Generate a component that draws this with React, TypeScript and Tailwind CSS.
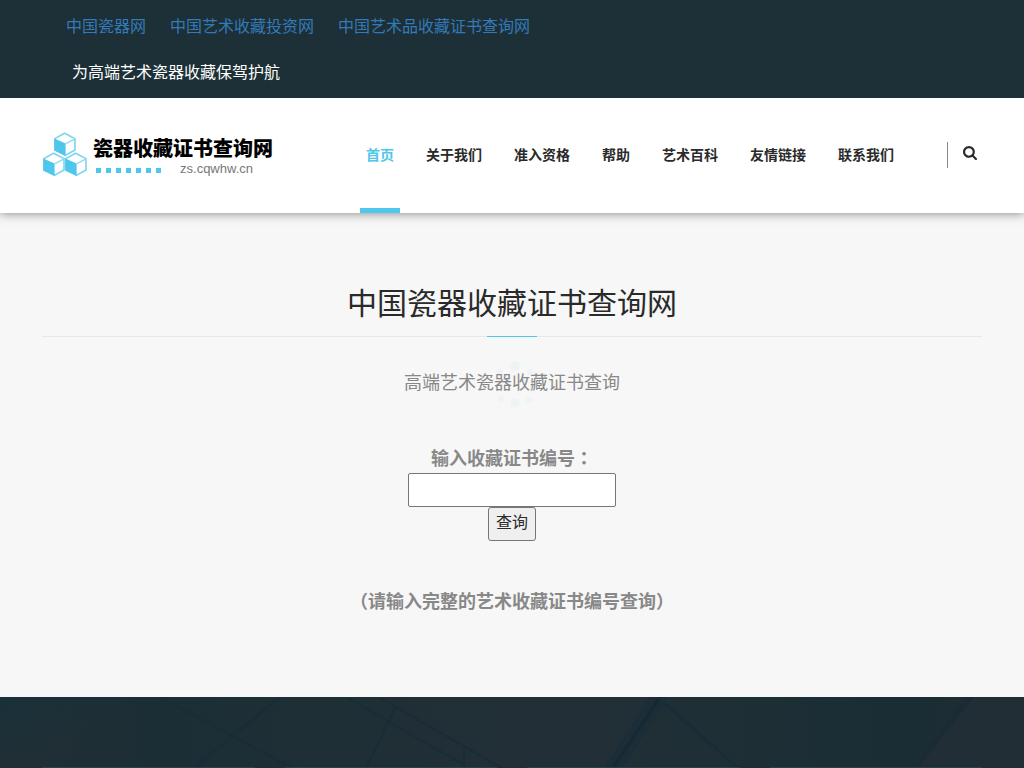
const topLinks = ['中国瓷器网', '中国艺术收藏投资网', '中国艺术品收藏证书查询网'];

const navItems = ['首页', '关于我们', '准入资格', '帮助', '艺术百科', '友情链接', '联系我们'];

// Top-left corner of the hexagon of each cube
const cubes = [
  { x: 11, y: 0 },
  { x: 0, y: 20 },
  { x: 22, y: 20 },
];

const spinnerDots = [
  { cx: 25, cy: 5, r: 5 },
  { cx: 10, cy: 11, r: 3 },
  { cx: 40, cy: 11, r: 3 },
  { cx: 11, cy: 38, r: 3 },
  { cx: 25, cy: 42, r: 5 },
  { cx: 39, cy: 39, r: 3 },
];

function Logo() {
  return (
    <a href="#" className="flex items-start gap-[6px] pl-px text-black">
      <svg className="w-[44px] h-[46px] shrink-0" viewBox="0 0 44 46" aria-hidden="true">
        {cubes.map((c) => (
          <g key={`${c.x}-${c.y}`} transform={`translate(${c.x} ${c.y})`}>
            <path d="M0.8 6.6 L10.6 1.2 L21 6.6 V18 L11.4 23.4 L0.8 18 Z" fill="#fff" stroke="#7ad4f0" strokeWidth="1.6" strokeLinejoin="round" />
            <path d="M0.4 6.6 L11.6 11.6 V23.8 L0.4 18.4 Z" fill="#4fc6ec" />
            <path d="M11.4 11.8 L21 6.8" stroke="#8fdaf2" strokeWidth="1.4" />
          </g>
        ))}
      </svg>
      <span className="block pt-[5px]">
        <span className="block text-[20px] leading-6 font-black whitespace-nowrap">瓷器收藏证书查询网</span>
        <span className="flex items-center justify-between pr-5 pl-[3px]">
          <svg className="mt-1 w-[66px] h-[6px]" viewBox="0 0 66 6" aria-hidden="true">
            {[0, 10, 20, 30, 40, 50, 60].map((x) => (
              <rect key={x} x={x} y="0" width="5" height="5" fill="#4fc6ec" />
            ))}
          </svg>
          <span className="text-[13px] leading-4 text-[#777]">zs.cqwhw.cn</span>
        </span>
      </span>
    </a>
  );
}

function SearchIcon() {
  return (
    <svg className="size-[14px]" viewBox="0 128 1664 1664" fill="currentColor" aria-hidden="true">
      <path d="M1152 832q0-185-131.5-316.5T704 384 387.5 515.5 256 832t131.5 316.5T704 1280t316.5-131.5T1152 832zm512 832q0 52-38 90t-90 38q-54 0-90-38l-343-342q-179 124-399 124-143 0-273.5-55.5t-225-150-150-225T0 832t55.5-273.5 150-225 225-150T704 128t273.5 55.5 225 150 150 225T1408 832q0 220-124 399l343 343q37 37 37 90z" />
    </svg>
  );
}

function GlassBackdrop() {
  return (
    <svg className="absolute inset-0 w-full h-full" viewBox="0 0 1024 71" preserveAspectRatio="none" aria-hidden="true">
      <defs>
        <linearGradient id="glass" x1="0" x2="1" y1="0" y2="0">
          <stop offset="0" stopColor="#212f35" />
          <stop offset="0.15" stopColor="#1c2e35" />
          <stop offset="0.3" stopColor="#1e2f36" />
          <stop offset="0.55" stopColor="#232f36" />
          <stop offset="0.7" stopColor="#1e2f36" />
          <stop offset="0.88" stopColor="#1b2d34" />
          <stop offset="1" stopColor="#1d2d34" />
        </linearGradient>
        <linearGradient id="pane" x1="0" x2="1" y1="0" y2="1">
          <stop offset="0" stopColor="#19303a" />
          <stop offset="0.5" stopColor="#19303a" stopOpacity="0" />
        </linearGradient>
      </defs>
      <rect width="1024" height="71" fill="url(#glass)" />
      <rect width="160" height="71" fill="url(#pane)" />
      <path d="M915 71 L974 0 H1024 V71 Z" fill="#222e35" />
      <g fill="none" stroke="#192c37" strokeWidth="2">
        <path d="M160 0 L292 71" />
        <path d="M280 0 L194 71" strokeWidth="3" />
        <path d="M346 0 L464 68" />
        <path d="M378 0 L502 71" />
        <path d="M396 9 L366 71" />
        <path d="M464 50 V71" />
        <path d="M662 4 L738 71" strokeWidth="3" />
      </g>
      <path d="M650 0 H668 L622 71 H604 Z" fill="#1a2d38" />
      <path d="M660 0 L613 71" stroke="#18282f" strokeWidth="3" />
      <path d="M970 0 L915 71" stroke="#1a2b36" strokeWidth="5" />
    </svg>
  );
}

export default function App() {
  return (
    <div className="min-h-screen bg-[#f7f7f7] font-['Liberation_Sans','Noto_Sans_CJK_SC',sans-serif] text-[#2a2a2a]">
      {/* Top bar */}
      <div className="relative z-10 bg-[#1d3037] px-[42px] pt-[13px] pb-[11px]">
        <div className="flex gap-6 px-6 text-base leading-7 text-[#337ab7]">
          {topLinks.map((link) => (
            <a key={link} href="#">{link}</a>
          ))}
        </div>
        <p className="mt-[18px] pl-[30px] text-base leading-7 text-white">为高端艺术瓷器收藏保驾护航</p>
      </div>

      {/* Header */}
      <header className="relative flex justify-between bg-white px-[42px] shadow-[0_0_10px_rgba(0,0,0,0.5)]">
        <div className="pt-[34px]">
          <Logo />
        </div>
        <div className="flex">
          <nav className="flex gap-5">
            {navItems.map((item, i) => (
              <a
                key={item}
                href="#"
                className={`h-[115px] border-b-[5px] px-[6px] pt-[45px] text-sm leading-6 font-bold whitespace-nowrap ${
                  i === 0 ? 'border-[#4fc6ec] text-[#4fc6ec]' : 'border-transparent'
                }`}
              >
                {item}
              </a>
            ))}
          </nav>
          <button
            type="button"
            aria-label="搜索"
            className="mt-11 ml-[47px] flex h-[26px] items-start border-l border-[#7f8a8e] pt-1 pr-[5px] pl-[15px]"
          >
            <SearchIcon />
          </button>
        </div>
      </header>

      {/* Query */}
      <main className="px-[42px] pt-[68px] pb-[77px] text-center">
        <h1 className="text-[30px] leading-[46px]">中国瓷器收藏证书查询网</h1>
        <div className="mt-[9px] h-px bg-[#e8e8e8]">
          <div className="mx-auto h-px w-[50px] bg-[#4fc6ec]" />
        </div>
        <div className="relative mt-7">
          <p className="text-lg leading-9 text-[#888]">高端艺术瓷器收藏证书查询</p>
          <svg className="pointer-events-none absolute inset-x-0 -top-1 mx-auto h-12 w-11" viewBox="0 0 44 48" aria-hidden="true">
            {spinnerDots.map((d) => (
              <circle key={`${d.cx}-${d.cy}`} cx={d.cx} cy={d.cy} r={d.r} fill="#4fc6ec" opacity="0.05" />
            ))}
          </svg>
        </div>
        <form className="mt-10 flex flex-col items-center text-lg leading-9 text-[#888]" onSubmit={(e) => e.preventDefault()}>
          <label htmlFor="certificate" className="h-8 leading-8 font-bold">
            输入收藏证书编号<span className="font-['Noto_Sans_CJK_TC',sans-serif]">：</span>
          </label>
          <input
            id="certificate"
            type="text"
            className="h-[34px] w-[208px] rounded-[2px] border border-[#767676] bg-white px-1 text-base text-[#2a2a2a]"
          />
          <button
            type="submit"
            className="h-[34px] rounded-[3px] border border-[#767676] bg-[#efefef] px-[7px] pb-[2px] text-base leading-7 text-[#2a2a2a]"
          >
            查询
          </button>
          <p className="mt-[43px] font-bold">（请输入完整的艺术收藏证书编号查询）</p>
        </form>
      </main>

      <section className="relative h-[71px] overflow-hidden bg-[#1f2f36]">
        <GlassBackdrop />
        <div className="relative grid grid-cols-4 gap-[30px] px-[42px] pt-[70px]">
          {[0, 1, 2, 3].map((n) => (
            <div key={n} className="h-px bg-[#24424a]" />
          ))}
        </div>
      </section>
    </div>
  );
}
